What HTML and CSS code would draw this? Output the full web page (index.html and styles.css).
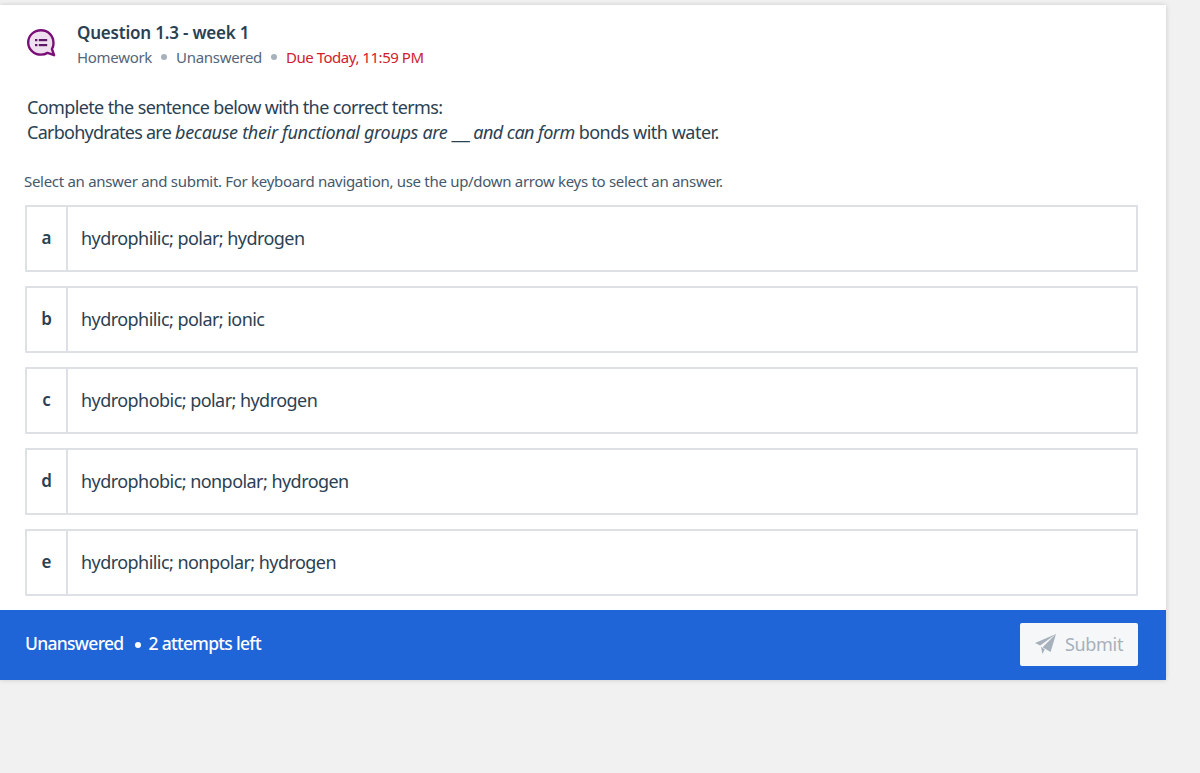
FILE: index.html
```html
<!DOCTYPE html>
<html lang="en">
<head>
<meta charset="utf-8">
<title>Question 1.3 - week 1</title>
<link rel="stylesheet" href="styles.css">
</head>
<body>
<main class="card">
  <header class="head">
    <svg class="qicon" width="30" height="30" viewBox="0 0 30 30" aria-hidden="true">
      <path d="M15 2.2C7.9 2.2 2.2 7.6 2.2 14.4S7.9 26.6 15 26.6c2.4 0 4.6-.6 6.5-1.7l6.6 2.3-2.2-6.2c1-1.7 1.6-3.6 1.6-5.6C27.5 7.6 22 2.2 15 2.2z" fill="#efe0ef" stroke="#7a0f78" stroke-width="2.4" stroke-linejoin="round"/>
      <rect x="9" y="11" width="2.4" height="2.2" fill="#5c1a66"/>
      <rect x="9" y="16" width="2.4" height="2.2" fill="#5c1a66"/>
      <rect x="12.8" y="11" width="8.4" height="2.2" fill="#5c1a66"/>
      <rect x="12.8" y="16" width="8.4" height="2.2" fill="#5c1a66"/>
    </svg>
    <div class="head-text">
      <h1 class="title">Question 1.3 - week 1</h1>
      <div class="meta">
        <span>Homework</span><i class="dot"></i><span>Unanswered</span><i class="dot"></i><span class="due">Due Today, 11:59 PM</span>
      </div>
    </div>
  </header>
  <div class="prompt">
    <p>Complete the sentence below with the correct terms:</p>
    <p class="second">Carbohydrates are <em>because their functional groups are</em> <span class="blank">__</span> <em class="tight">and can form</em> <span class="tail">bonds with water.</span></p>
  </div>
  <p class="hint">Select an answer and submit. For keyboard navigation, use the up/down arrow keys to select an answer.</p>
  <ul class="options">
    <li class="option"><span class="letter">a</span><span class="answer">hydrophilic; polar; hydrogen</span></li>
    <li class="option"><span class="letter">b</span><span class="answer">hydrophilic; polar; ionic</span></li>
    <li class="option"><span class="letter">c</span><span class="answer">hydrophobic; polar; hydrogen</span></li>
    <li class="option"><span class="letter">d</span><span class="answer">hydrophobic; nonpolar; hydrogen</span></li>
    <li class="option"><span class="letter">e</span><span class="answer">hydrophilic; nonpolar; hydrogen</span></li>
  </ul>
  <footer class="bar">
    <div class="status"><span>Unanswered</span><i class="bar-dot"></i><span>2 attempts left</span></div>
    <button class="submit" type="button">
      <svg width="21" height="21" viewBox="0 0 21 21" aria-hidden="true"><path d="M21 0 0 9l5.2 2.6zM21 0 7.6 13.2l8 4.8zM6 12.8 7.4 20l2.4-4.4z" fill="#a6b1bc"/></svg>
      <span>Submit</span>
    </button>
  </footer>
</main>
</body>
</html>
```
FILE: styles.css
```css
* { box-sizing: border-box; }
html, body { margin: 0; height: 100%; }
body {
  background: #f1f1f1;
  padding-top: 5px;
  font-family: "Noto Sans", "Lato", sans-serif;
  color: #2b4152;
  overflow: hidden;
}
.card {
  width: 1166px;
  background: #fff;
  box-shadow: 0 0 5px rgba(0, 0, 0, .16);
}
.head {
  display: flex;
  align-items: flex-start;
  padding: 15px 0 0 26px;
  height: 87px;
}
.qicon { margin-top: 8px; flex: none; }
.head-text { margin-left: 21px; padding-top: 1px; }
.title {
  margin: 0;
  font-size: 17px;
  line-height: 24px;
  font-weight: 600;
  letter-spacing: -.2px;
  color: #2b4152;
}
.meta {
  display: flex;
  align-items: center;
  font-size: 15px;
  line-height: 24px;
  letter-spacing: -.3px;
  color: #54657a;
}
.dot {
  width: 6px;
  height: 6px;
  margin: 0 9px;
  border-radius: 50%;
  background: #a6b1bc;
}
.due { color: #d0202e; letter-spacing: -.47px; }
.prompt { padding: 3px 0 0 27px; font-size: 18px; line-height: 25px; height: 77px; letter-spacing: -.62px; }
.prompt p { margin: 0; }
.prompt .second { letter-spacing: -.74px; }
.prompt em { letter-spacing: -.32px; }
.prompt em.tight { letter-spacing: -.55px; }
.prompt .tail { letter-spacing: -.5px; }
.blank { font-size: 21px; line-height: 0; letter-spacing: -.4px; }
.hint {
  margin: 0 0 12px;
  padding-left: 24px;
  font-size: 15px;
  line-height: 24px;
  letter-spacing: -.3px;
  color: #44586b;
}
.options {
  list-style: none;
  margin: 0;
  padding: 0 28px 0 25px;
  display: flex;
  flex-direction: column;
  gap: 14px;
}
.option {
  display: flex;
  height: 67px;
  border: 2px solid #dde1e6;
  border-radius: 1px;
}
.letter {
  width: 41px;
  flex: none;
  display: flex;
  align-items: center;
  justify-content: center;
  padding-bottom: 2px;
  border-right: 2px solid #dde1e6;
  font-size: 17px;
  font-weight: 600;
}
.answer {
  display: flex;
  align-items: center;
  padding: 0 0 2px 13px;
  font-size: 18px;
  letter-spacing: -.55px;
}
.bar {
  margin-top: 14px;
  height: 70px;
  background: #1f65d8;
  display: flex;
  align-items: center;
  justify-content: space-between;
  padding: 0 28px 2px 25px;
  color: #fff;
}
.status { display: flex; align-items: center; padding-bottom: 2px; font-size: 17.5px; font-weight: 500; letter-spacing: -.7px; }
.bar-dot {
  width: 6px;
  height: 6px;
  margin: 4px 8px 0 11px;
  border-radius: 50%;
  background: #fff;
}
.submit {
  width: 118px;
  height: 43px;
  display: flex;
  align-items: center;
  justify-content: center;
  gap: 9px;
  background: #f6f7f8;
  border: 0;
  border-radius: 2px;
  color: #a6b1bc;
  font-family: inherit;
  font-size: 18px;
  letter-spacing: -.3px;
  padding: 0;
}
```
